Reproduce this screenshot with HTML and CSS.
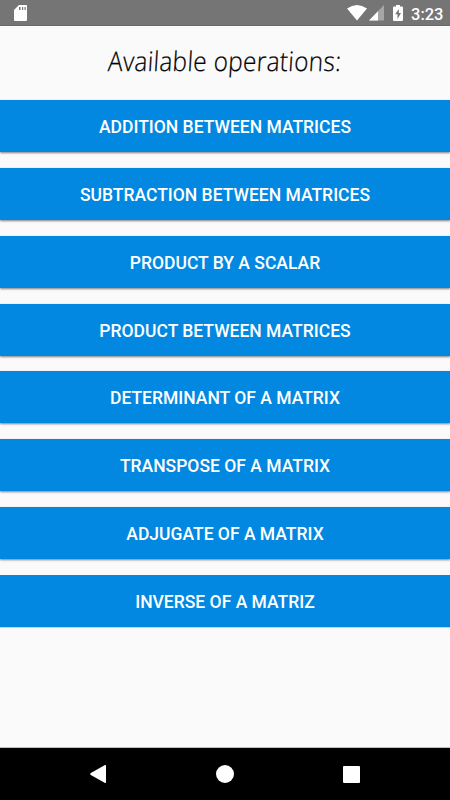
FILE: index.html
```html
<!DOCTYPE html>
<html lang="en">
<head>
<meta charset="utf-8">
<title>Matrix operations</title>
<link rel="stylesheet" href="styles.css">
</head>
<body>
<div class="screen">
  <header class="status">
    <svg class="sd" width="13" height="16" viewBox="0 0 13 16"><path fill="#fff" d="M5 0h7q1 0 1 1v14q0 1-1 1H1q-1 0-1-1V5z"/><path fill="#757575" d="M5 2h1.500v3H5zM8 2h1.200v3H8zM10.500 2h1.200v3h-1.200z"/></svg>
    <svg width="64" height="18" viewBox="0 0 64 18"><path fill="#fff" d="M0 3.500Q10-3.500 20 3.500L10 15.500z"/><path fill="#a6a6a6" d="M37 0v15.500H22z"/><path fill="#fff" d="M31 6.200v9.300h-9z"/><path fill="#fff" d="M49 1.500V0h4v1.500h2q1 0 1 1V15q0 1-1 1h-8q-1 0-1-1V2.500q0-1 1-1z"/><path fill="#757575" d="M51.800 4l-3.600 5.300h2.300v4.700l3.500-6h-2.200z"/></svg>
    <span class="time">3:23</span>
  </header>
  <main class="content">
    <h1 class="heading"><span class="heading-text">Available operations:</span></h1>
    <div class="operations">
      <button class="operation">Addition between matrices</button>
      <button class="operation">Subtraction between matrices</button>
      <button class="operation">Product by a scalar</button>
      <button class="operation">Product between matrices</button>
      <button class="operation">Determinant of a matrix</button>
      <button class="operation">Transpose of a matrix</button>
      <button class="operation">Adjugate of a matrix</button>
      <button class="operation">Inverse of a matriz</button>
    </div>
  </main>
  <nav class="navbar">
    <svg width="16" height="18" viewBox="0 0 16 18"><path fill="#fff" d="M15 0q1-.5 1 1v16q0 1.500-1 1L.8 10Q-.5 9 .8 8z"/></svg>
    <svg width="18" height="18" viewBox="0 0 18 18"><circle cx="9" cy="9" r="9" fill="#fff"/></svg>
    <svg width="17" height="17" viewBox="0 0 17 17"><rect width="17" height="17" rx="1" fill="#fff"/></svg>
  </nav>
</div>
</body>
</html>
```
FILE: styles.css
```css
* { box-sizing: border-box; }
body { margin: 0; background: #fafafa; font-family: Roboto, sans-serif; }
.screen { height: 800px; display: flex; flex-direction: column; overflow: hidden; }
.status {
  height: 26px;
  padding: 5px 8px 0 14px;
  display: flex;
  align-items: flex-start;
  background: #757575;
  border-bottom: 1px solid #6a6a6a;
  color: #fff;
}
.sd { margin-right: auto; }
.time { width: 31px; font-size: 16.5px; font-weight: 500; line-height: 19px; white-space: nowrap; }
.content { flex: 1; }
.heading {
  height: 74px;
  margin: 0;
  display: flex;
  justify-content: center;
  font-family: "Open Sans", sans-serif;
  font-size: 27px;
  font-weight: 300;
  line-height: 70px;
  color: #000;
}
.heading-text {
  display: block;
  white-space: nowrap;
  letter-spacing: .4px;
  -webkit-text-stroke: .25px #000;
  transform: scaleX(.9) skewX(-4deg);
}
.operations { display: flex; flex-direction: column; gap: 15.86px; }
.operation {
  height: 52px;
  padding: 2px 0 0;
  border: 0;
  background: #0288e0;
  color: #fff;
  font: 500 17.5px/50px Roboto, sans-serif;
  text-transform: uppercase;
  box-shadow: 0 1px 2px rgba(0, 0, 0, .5);
}
.operation:last-child { box-shadow: 0 1px 0 #bdd8ee; }
.navbar {
  height: 52px;
  padding: 0 90px;
  display: flex;
  align-items: center;
  justify-content: space-between;
  background: #000;
  box-shadow: 0 -1px 0 #c0c0c0;
}
```
